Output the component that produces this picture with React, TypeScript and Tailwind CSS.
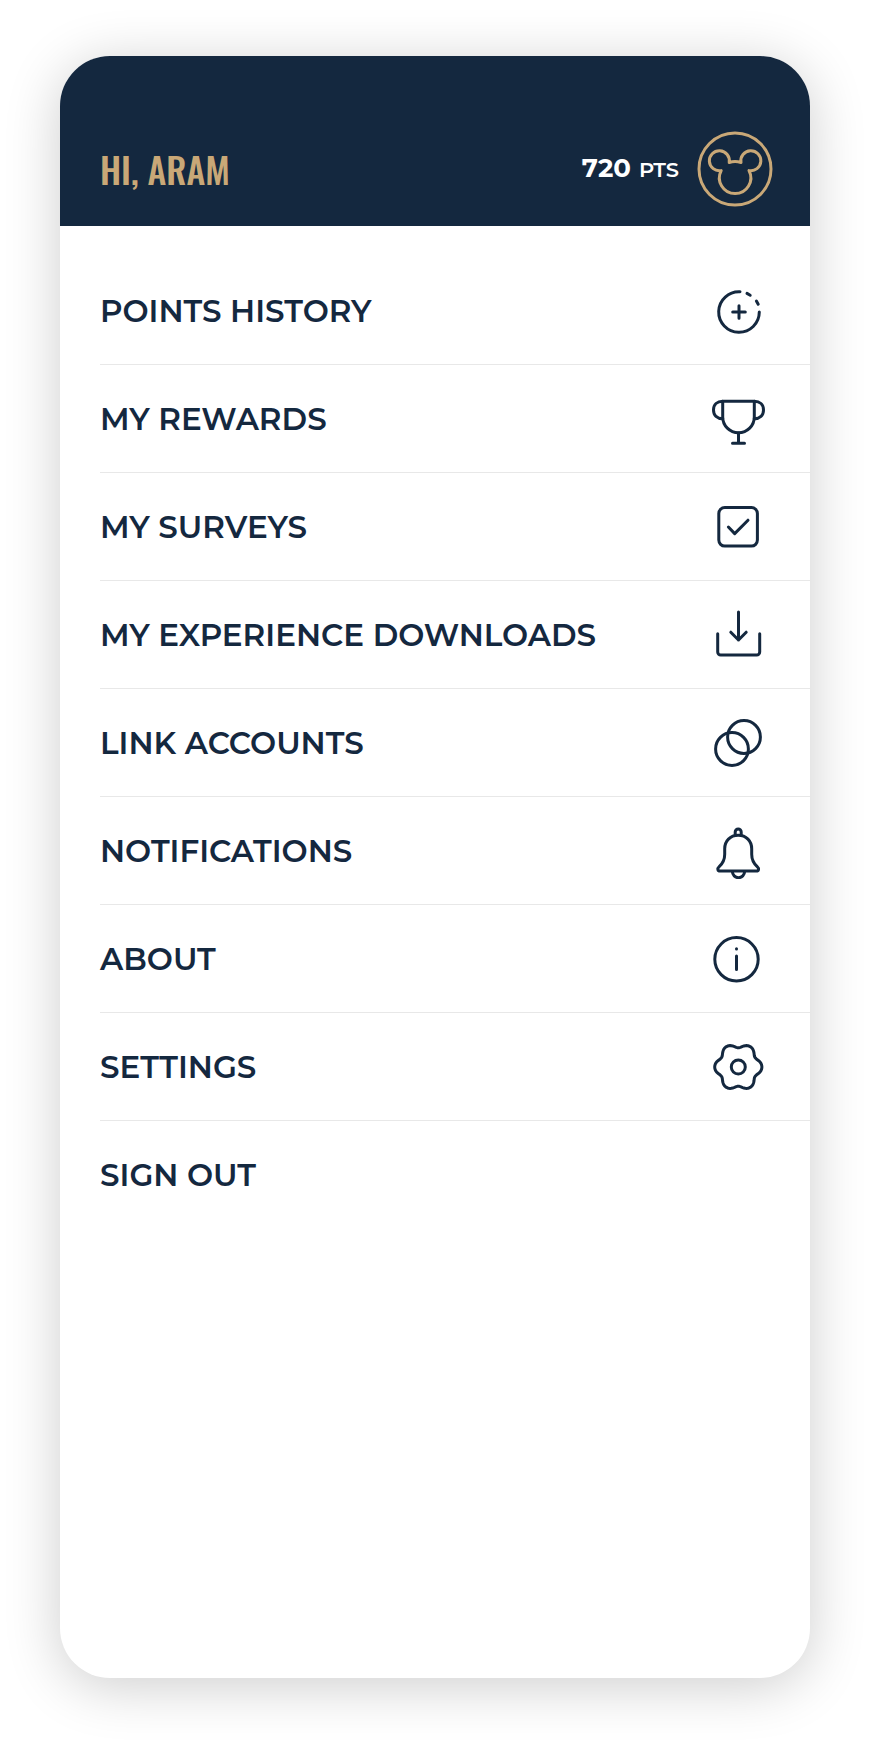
import type { ReactNode } from 'react';

interface MenuItem {
    label: string;
    icon?: ReactNode;
}

// Six soft lobes around the centre of the settings icon.
const gearPoints = Array.from({ length: 120 }, (_, i) => {
    const angle = (i / 120) * Math.PI * 2;
    const radius = 21.6 + 2.2 * Math.cos(6 * angle) - 0.2 * Math.cos(12 * angle);
    return `${(27.3 + radius * Math.cos(angle)).toFixed(2)},${(28 + radius * Math.sin(angle)).toFixed(2)}`;
}).join(' ');

const items: MenuItem[] = [
    {
        label: 'POINTS HISTORY',
        icon: (
            <>
                <path d="M48.3 29A20.3 20.3 0 1 1 29 8.7" />
                <path d="M36 10.4l3.2 1.8M45.4 18l1.8 3.2M28 22.7v12.6M21.7 29h12.6" />
            </>
        ),
    },
    {
        label: 'MY REWARDS',
        icon: (
            <>
                <path d="M11.7 10.3h31.6V26a15.8 15.8 0 0 1-31.6 0z" />
                <path d="M11.7 10.3c-5.5 0-9.2 3.4-9.2 8.7s3.7 8.7 9.2 8.7M43.3 10.3c5.5 0 9.2 3.4 9.2 8.7s-3.7 8.7-9.2 8.7" />
                <path d="M27.5 42v10.3M21.5 52.3h12" />
            </>
        ),
    },
    {
        label: 'MY SURVEYS',
        icon: (
            <>
                <rect x="7.8" y="8.5" width="38.6" height="38.6" rx="6" />
                <path d="M17.4 28l6.3 6.6L37 21.2" />
            </>
        ),
    },
    {
        label: 'MY EXPERIENCE DOWNLOADS',
        icon: (
            <>
                <path d="M6.7 26.8V45a3 3 0 0 0 3 3h36a3 3 0 0 0 3-3V26.8" />
                <path d="M27.5 5v28M19.8 25.2l7.7 7.8 7.7-7.8" />
            </>
        ),
    },
    {
        label: 'LINK ACCOUNTS',
        icon: (
            <>
                <circle cx="33" cy="22" r="16.4" />
                <circle cx="21" cy="34" r="16.4" />
            </>
        ),
    },
    {
        label: 'NOTIFICATIONS',
        icon: (
            <>
                <path d="M24.2 12.6V9a3 3 0 0 1 6 0v3.6" />
                <path d="M27.2 12.3c-8 0-13.5 5.7-13.5 13.5v5.4c0 5.8-1.7 9-5.5 12.4C6 45.6 6.6 48 9.2 48h36c2.6 0 3.2-2.4 1-4.4-3.8-3.4-5.5-6.6-5.5-12.4v-5.4c0-7.8-5.5-13.5-13.5-13.5z" />
                <path d="M21.4 48.6a6.1 6.1 0 0 0 12.2 0" />
            </>
        ),
    },
    {
        label: 'ABOUT',
        icon: (
            <>
                <circle cx="25.5" cy="28.3" r="21.7" />
                <path d="M25.5 25v13.5M25.5 17.8v.1" />
            </>
        ),
    },
    {
        label: 'SETTINGS',
        icon: (
            <>
                <polygon points={gearPoints} />
                <circle cx="27.3" cy="28" r="7" />
            </>
        ),
    },
    { label: 'SIGN OUT' },
];

function MenuIcon({ children }: { children: ReactNode }) {
    return (
        <svg
            viewBox="0 0 56 56"
            className="size-14 shrink-0"
            fill="none"
            stroke="currentColor"
            strokeWidth="3"
            strokeLinecap="round"
            strokeLinejoin="round"
            aria-hidden="true"
        >
            {children}
        </svg>
    );
}

function MouseBadge() {
    return (
        <svg
            viewBox="0 0 76 76"
            className="size-[76px]"
            fill="none"
            stroke="currentColor"
            strokeWidth="3"
            strokeLinejoin="round"
            aria-hidden="true"
        >
            <circle cx="38" cy="38" r="36" />
            <path d="M32.2 31.5Q38 29.7 44 31.5A10 10 0 1 1 52 39.6A15.7 15.7 0 1 1 24.2 39.6A10 10 0 1 1 32.2 31.5z" />
        </svg>
    );
}

export default function App() {
    return (
        <div className="min-h-screen bg-white px-15 pt-14 pb-16 font-['Montserrat','Inter',sans-serif] text-[#14283f]">
            <main className="min-h-[calc(100vh-120px)] overflow-hidden rounded-[50px] bg-white shadow-[0_8px_56px_rgba(0,0,0,0.2)]">
                <header className="flex items-center justify-between bg-[#14283f] pt-[75px] pr-[37px] pb-[19px] pl-10">
                    <h1 className="font-['Oswald','Roboto_Condensed','Liberation_Sans_Narrow',sans-serif] text-4xl leading-10 font-medium text-[#c9a877]">
                        HI, ARAM
                    </h1>
                    <div className="flex items-center gap-[18px] text-[#c9a877]">
                        <p className="flex items-baseline gap-2 text-white">
                            <span className="text-[26px] leading-8 font-bold">720</span>
                            <span className="text-[21px] font-semibold">PTS</span>
                        </p>
                        <MouseBadge />
                    </div>
                </header>

                <nav aria-label="Account" className="pt-[31px] pl-10">
                    <ul>
                        {items.map((item) => (
                            <li key={item.label} className="border-b border-[#e8e8e8] last:border-b-0">
                                <a href="#" className="flex h-[107px] items-center justify-between pr-[43px] text-[31px] leading-9 font-semibold">
                                    {item.label}
                                    {item.icon && <MenuIcon>{item.icon}</MenuIcon>}
                                </a>
                            </li>
                        ))}
                    </ul>
                </nav>
            </main>
        </div>
    );
}
